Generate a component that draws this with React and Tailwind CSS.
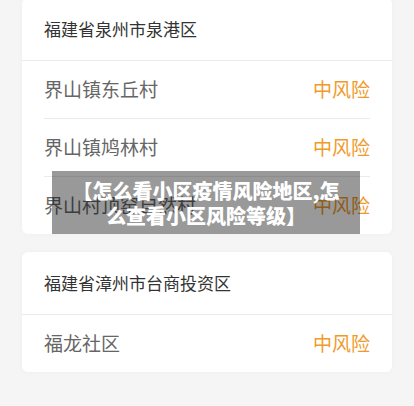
import React from "react";

const cards = [
  {
    title: "福建省泉州市泉港区",
    rows: ["界山镇东丘村", "界山镇鸠林村", "界山村顶窑自然村"],
  },
  {
    title: "福建省漳州市台商投资区",
    rows: ["福龙社区"],
  },
];

function Card({ title, rows, first }) {
  return (
    <div
      className={
        "mx-[22px] bg-white rounded-md shadow-[0_0_6px_rgba(0,0,0,0.03)] " +
        (first ? "mt-[-2px]" : "mt-[18px]")
      }
    >
      <div className="h-[63px] flex items-center px-[22px] border-b border-[#ebebeb] text-[17px] text-[#333]">
        {title}
      </div>
      <div className="px-[22px]">
        {rows.map((r, i) => (
          <div
            key={r}
            className={
              "flex items-center justify-between " +
              (i < rows.length - 1 ? "h-[58px] border-b border-[#ebebeb]" : "h-[57px]")
            }
          >
            <span className="text-[19px] text-[#666]">{r}</span>
            <span className="text-[19px] text-[#f09a2a]">中风险</span>
          </div>
        ))}
      </div>
    </div>
  );
}

export default function App() {
  return (
    <div
      className="relative w-[414px] h-[406px] overflow-hidden bg-[#f5f5f5]"
      style={{ fontFamily: '"Noto Sans CJK SC", "Noto Sans", sans-serif' }}
    >
      {cards.map((c, i) => (
        <Card key={c.title} {...c} first={i === 0} />
      ))}
      <div className="absolute left-[52px] top-[171px] w-[308px] h-[63px] bg-[rgba(0,0,0,0.4)] flex items-center justify-center">
        <p className="text-white font-black text-[20px] leading-[25px] text-center">
          【怎么看小区疫情风险地区,怎
          <br />
          么查看小区风险等级】
        </p>
      </div>
    </div>
  );
}
